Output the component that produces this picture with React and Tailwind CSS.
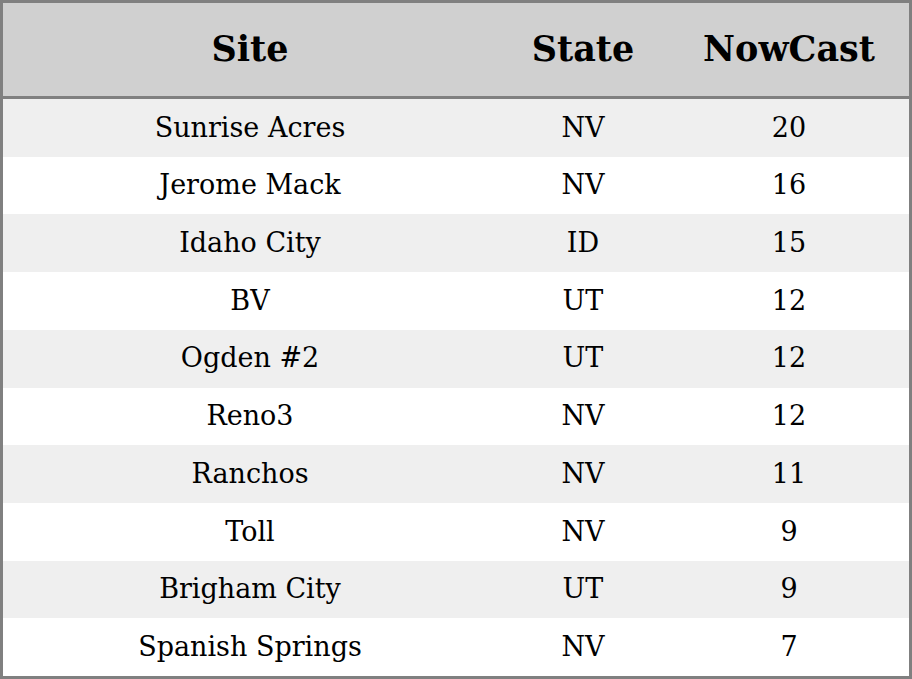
const rows = [
  ["Sunrise Acres", "NV", "20"],
  ["Jerome Mack", "NV", "16"],
  ["Idaho City", "ID", "15"],
  ["BV", "UT", "12"],
  ["Ogden #2", "UT", "12"],
  ["Reno3", "NV", "12"],
  ["Ranchos", "NV", "11"],
  ["Toll", "NV", "9"],
  ["Brigham City", "UT", "9"],
  ["Spanish Springs", "NV", "7"],
];

export default function App() {
  return (
    <div className="h-[679px] w-[912px] bg-white font-['DejaVu_Serif',serif] text-black">
      <div className="flex h-full flex-col border-[3px] border-[#808080]">
        <div className="grid h-[96px] shrink-0 grid-cols-[494px_172px_1fr] items-center border-b-[3px] border-[#808080] bg-[#d0d0d0] text-[35px] font-bold">
          <div className="text-center">Site</div>
          <div className="text-center">State</div>
          <div className="text-center">NowCast</div>
        </div>
        <div className="flex flex-1 flex-col">
          {rows.map(([site, state, val], i) => (
            <div
              key={site}
              className={`grid flex-1 grid-cols-[494px_172px_1fr] items-center text-[27px] ${
                i % 2 === 0 ? "bg-[#efefef]" : "bg-white"
              }`}
            >
              <div className="text-center">{site}</div>
              <div className="text-center">{state}</div>
              <div className="text-center">{val}</div>
            </div>
          ))}
        </div>
      </div>
    </div>
  );
}
